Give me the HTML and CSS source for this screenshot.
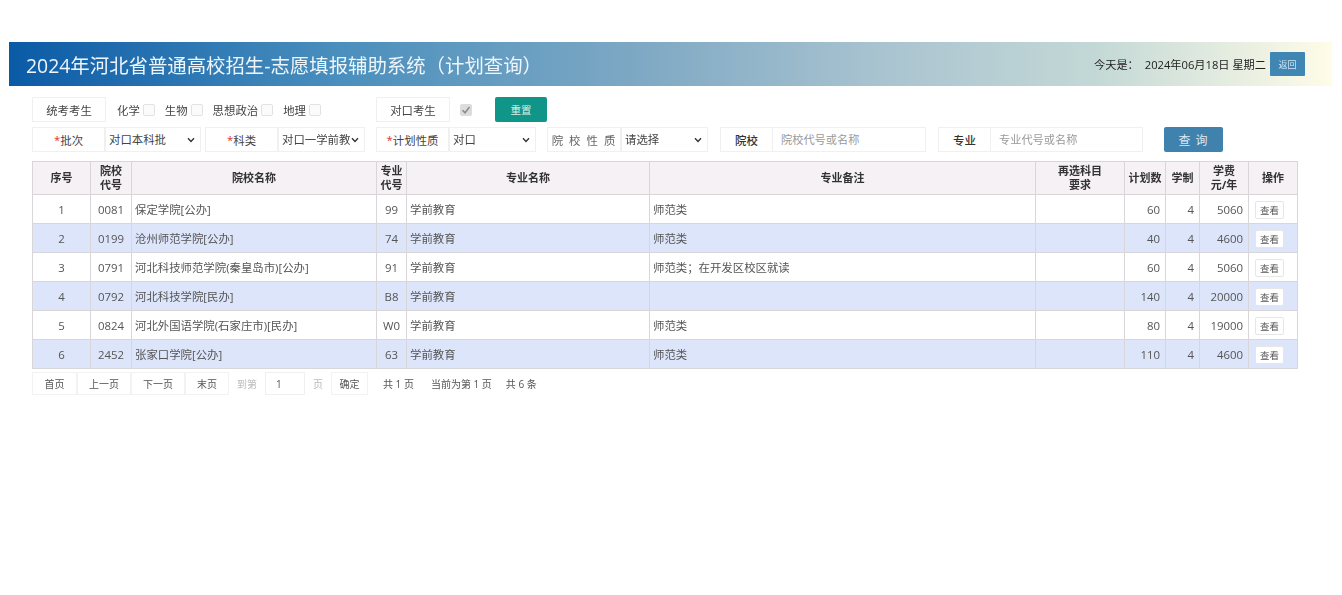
FILE: index.html
```html
<!DOCTYPE html>
<html lang="zh-CN">
<head>
<meta charset="utf-8">
<title>计划查询</title>
<link rel="stylesheet" href="styles.css">
</head>
<body>
<div class="page">
  <header class="banner">
    <h1>2024年河北省普通高校招生-志愿填报辅助系统（计划查询）</h1>
    <div class="today"><span>今天是：</span><span class="date">2024年06月18日 星期二</span><button class="back">返回</button></div>
  </header>
  <main class="content">
    <div class="row r1">
      <span class="lab w74">统考考生</span>
      <label class="chk c1">化学<i class="box"></i></label>
      <label class="chk">生物<i class="box"></i></label>
      <label class="chk">思想政治<i class="box"></i></label>
      <label class="chk">地理<i class="box"></i></label>
      <span class="lab w74 m2">对口考生</span>
      <i class="box checked"><svg viewBox="0 0 12 12" width="12" height="12"><path d="M2.5 6.2 5 8.8 9.5 3" fill="none" stroke="#8d8d8d" stroke-width="1.6"/></svg></i>
      <button class="btn reset">重置</button>
    </div>
    <div class="row r2">
      <span class="lab w73"><b>*</b>批次</span>
      <select class="sel s96"><option>对口本科批</option></select>
      <span class="lab w73 ml4"><b>*</b>科类</span>
      <select class="sel s87"><option>对口一学前教育</option></select>
      <span class="lab w73 ml11"><b>*</b>计划性质</span>
      <select class="sel s87"><option>对口</option></select>
      <span class="lab w74 ml11 wide">院校性质</span>
      <select class="sel s87"><option>请选择</option></select>
      <span class="lab w53 ml12 strong">院校</span>
      <input class="inp i153" placeholder="院校代号或名称">
      <span class="lab w53 ml12 strong">专业</span>
      <input class="inp i152" placeholder="专业代号或名称">
      <button class="btn query">查 询</button>
    </div>
    <table class="plan">
      <colgroup>
        <col class="c-a"><col class="c-b"><col class="c-c"><col class="c-d"><col class="c-e"><col class="c-f"><col class="c-g"><col class="c-h"><col class="c-i"><col class="c-j"><col class="c-k">
      </colgroup>
      <thead>
        <tr><th>序号</th><th>院校<br>代号</th><th>院校名称</th><th>专业<br>代号</th><th>专业名称</th><th>专业备注</th><th>再选科目<br>要求</th><th>计划数</th><th>学制</th><th>学费<br>元/年</th><th>操作</th></tr>
      </thead>
      <tbody>
        <tr><td class="ctr">1</td><td class="ctr">0081</td><td>保定学院[公办]</td><td class="ctr">99</td><td>学前教育</td><td>师范类</td><td></td><td class="num">60</td><td class="num">4</td><td class="num">5060</td><td class="act"><button class="view">查看</button></td></tr>
        <tr><td class="ctr">2</td><td class="ctr">0199</td><td>沧州师范学院[公办]</td><td class="ctr">74</td><td>学前教育</td><td>师范类</td><td></td><td class="num">40</td><td class="num">4</td><td class="num">4600</td><td class="act"><button class="view">查看</button></td></tr>
        <tr><td class="ctr">3</td><td class="ctr">0791</td><td>河北科技师范学院(秦皇岛市)[公办]</td><td class="ctr">91</td><td>学前教育</td><td>师范类；在开发区校区就读</td><td></td><td class="num">60</td><td class="num">4</td><td class="num">5060</td><td class="act"><button class="view">查看</button></td></tr>
        <tr><td class="ctr">4</td><td class="ctr">0792</td><td>河北科技学院[民办]</td><td class="ctr">B8</td><td>学前教育</td><td></td><td></td><td class="num">140</td><td class="num">4</td><td class="num">20000</td><td class="act"><button class="view">查看</button></td></tr>
        <tr><td class="ctr">5</td><td class="ctr">0824</td><td>河北外国语学院(石家庄市)[民办]</td><td class="ctr">W0</td><td>学前教育</td><td>师范类</td><td></td><td class="num">80</td><td class="num">4</td><td class="num">19000</td><td class="act"><button class="view">查看</button></td></tr>
        <tr><td class="ctr">6</td><td class="ctr">2452</td><td>张家口学院[公办]</td><td class="ctr">63</td><td>学前教育</td><td>师范类</td><td></td><td class="num">110</td><td class="num">4</td><td class="num">4600</td><td class="act"><button class="view">查看</button></td></tr>
      </tbody>
    </table>
    <nav class="pager">
      <a class="pg w45">首页</a><a class="pg w54">上一页</a><a class="pg w54">下一页</a><a class="pg w44">末页</a>
      <span class="muted goto">到第</span>
      <input class="pinp" value="1">
      <span class="muted pageword">页</span>
      <a class="pg w37">确定</a>
      <span class="info i1">共 1 页</span>
      <span class="info i2">当前为第 1 页</span>
      <span class="info i3">共 6 条</span>
    </nav>
  </main>
</div>
</body>
</html>
```
FILE: styles.css
```css
* { box-sizing: border-box; }
html, body { margin: 0; padding: 0; background: #fff; }
body {
  font-family: "Open Sans", "Noto Sans CJK SC", sans-serif;
  font-size: 11.4px;
  color: #555;
  height: 595px;
  overflow: hidden;
}
.page { padding: 42px 10px 0 9px; filter: blur(0.7px); }
.banner {
  height: 44px;
  display: flex;
  align-items: center;
  justify-content: space-between;
  padding: 0 27px 0 17px;
  background: linear-gradient(90deg, #0a5aa6 0%, #4a8fbd 25%, #7fa9c4 48%, #a9c3d0 66%, #c3d8d6 82%, #fffce8 100%);
}
.banner h1 {
  margin: 0;
  font-size: 19.4px;
  font-weight: 400;
  color: #eef5fb;
  white-space: nowrap;
}
.today { display: flex; align-items: center; font-size: 11.2px; color: #222; }
.today .date { margin-left: 6px; margin-right: 4px; }
.back {
  width: 35px; height: 24px; padding: 0;
  border: 0; border-radius: 1px;
  background: #3f86b5; color: #d5e6f2;
  font: 9px "Noto Sans CJK SC", sans-serif;
}
.content { padding: 11px 0 0 23px; }
.row { display: flex; align-items: stretch; height: 25px; }
.r2 { margin-top: 5px; }
.lab {
  display: flex; align-items: center; justify-content: center;
  border: 1px solid #f0f0f0;
  background: #fff;
  color: #444;
  white-space: nowrap;
}
.lab b { color: #e0302a; font-weight: 400; }
.w74 { width: 74px; }
.w73 { width: 73px; }
.w53 { width: 53px; }
.m2 { margin-left: 45px; margin-right: 10px; }
.ml4 { margin-left: 4px; }
.ml11 { margin-left: 11px; }
.ml12 { margin-left: 12px; }
.wide { letter-spacing: 6px; padding-left: 5px; color: #666; }
.strong { color: #333; font-weight: 500; }
.chk { display: flex; align-items: center; margin-right: 10px; color: #444; }
.c1 { margin-left: 11px; }
.box {
  display: inline-block; width: 12px; height: 12px; margin-left: 3px;
  border: 1px solid #e2e2e2; border-radius: 2px; background: #fbfbfb;
}
.checked { align-self: center; margin-left: 0; background: #dcdcdc; border: 0; line-height: 0; }
.btn { border: 0; border-radius: 2px; padding: 0; font-family: inherit; color: #d9efe9; }
.reset { width: 52px; margin-left: 23px; background: #0f9688; font-size: 10.5px; }
.query { width: 59px; margin-left: 21px; background: #3f82ad; color: #dbe9f2; font-size: 12px; letter-spacing: 1px; }
.sel {
  height: 25px; padding: 0 14px 0 3px;
  border: 1px solid #f0f0f0; border-radius: 0;
  appearance: none;
  background: #fff url("data:image/svg+xml,%3Csvg xmlns='http://www.w3.org/2000/svg' viewBox='0 0 8 6'%3E%3Cpath d='M1 1.2 4 4.4 7 1.2' fill='none' stroke='%23333' stroke-width='1.4'/%3E%3C/svg%3E") no-repeat right 5px center / 8px 6px;
  color: #444;
  font: 11.4px "Open Sans", "Noto Sans CJK SC", sans-serif;
}
.s96 { width: 96px; }
.s87 { width: 87px; }
.inp {
  height: 25px; padding: 0 8px;
  border: 1px solid #f0f0f0; border-left: 0;
  font: 11.2px "Open Sans", "Noto Sans CJK SC", sans-serif;
  outline: 0;
}
.inp::placeholder, .pinp::placeholder { color: #999; }
.i153 { width: 153px; }
.i152 { width: 152px; }
.plan {
  width: 1265px; margin-top: 9px;
  table-layout: fixed;
  border-collapse: collapse;
  border: 1px solid #d9d6da;
}
.c-a { width: 58px; } .c-b { width: 41px; } .c-c { width: 245px; } .c-d { width: 30px; }
.c-e { width: 243px; } .c-f { width: 386px; } .c-g { width: 89px; } .c-h { width: 41px; }
.c-i { width: 34px; } .c-j { width: 49px; } .c-k { width: 49px; }
.plan th, .plan td { border: 1px solid #d9d6da; padding: 0 3px; overflow: hidden; white-space: nowrap; }
.plan th {
  height: 33px; background: #f5f1f4; color: #333;
  font-weight: 700; font-size: 11px; line-height: 14px; text-align: center;
}
.plan td { height: 29px; line-height: 14px; padding-top: 1px; }
.plan tbody tr:nth-child(even) td { background: #dde5fb; }
.ctr { text-align: center; }
.num { text-align: right; padding-right: 5px !important; }
.plan .act { padding-left: 6px; }
.view {
  display: block;
  width: 29px; height: 18px; padding: 0; margin-top: 1px;
  border: 1px solid #e6e6e6; border-radius: 2px;
  background: #fff; color: #555;
  font: 9.5px "Noto Sans CJK SC", sans-serif;
}
.pager { display: flex; align-items: center; height: 23px; margin-top: 3px; font-size: 10px; color: #555; }
.pg {
  display: flex; align-items: center; justify-content: center;
  height: 23px; border: 1px solid #f2f2f2; background: #fff;
}
.w45 { width: 45px; } .w54 { width: 54px; } .w44 { width: 44px; } .w37 { width: 37px; }
.muted { color: #bbb; }
.goto { margin-left: 8px; }
.pinp {
  width: 40px; height: 23px; margin-left: 8px; padding: 0 0 0 10px;
  border: 1px solid #f0f0f0; color: #555;
  font: 10px "Open Sans", sans-serif;
}
.pageword { margin-left: 8px; margin-right: 8px; }
.info { white-space: nowrap; }
.i1 { margin-left: 15px; }
.i2 { margin-left: 17px; }
.i3 { margin-left: 14px; }
```
